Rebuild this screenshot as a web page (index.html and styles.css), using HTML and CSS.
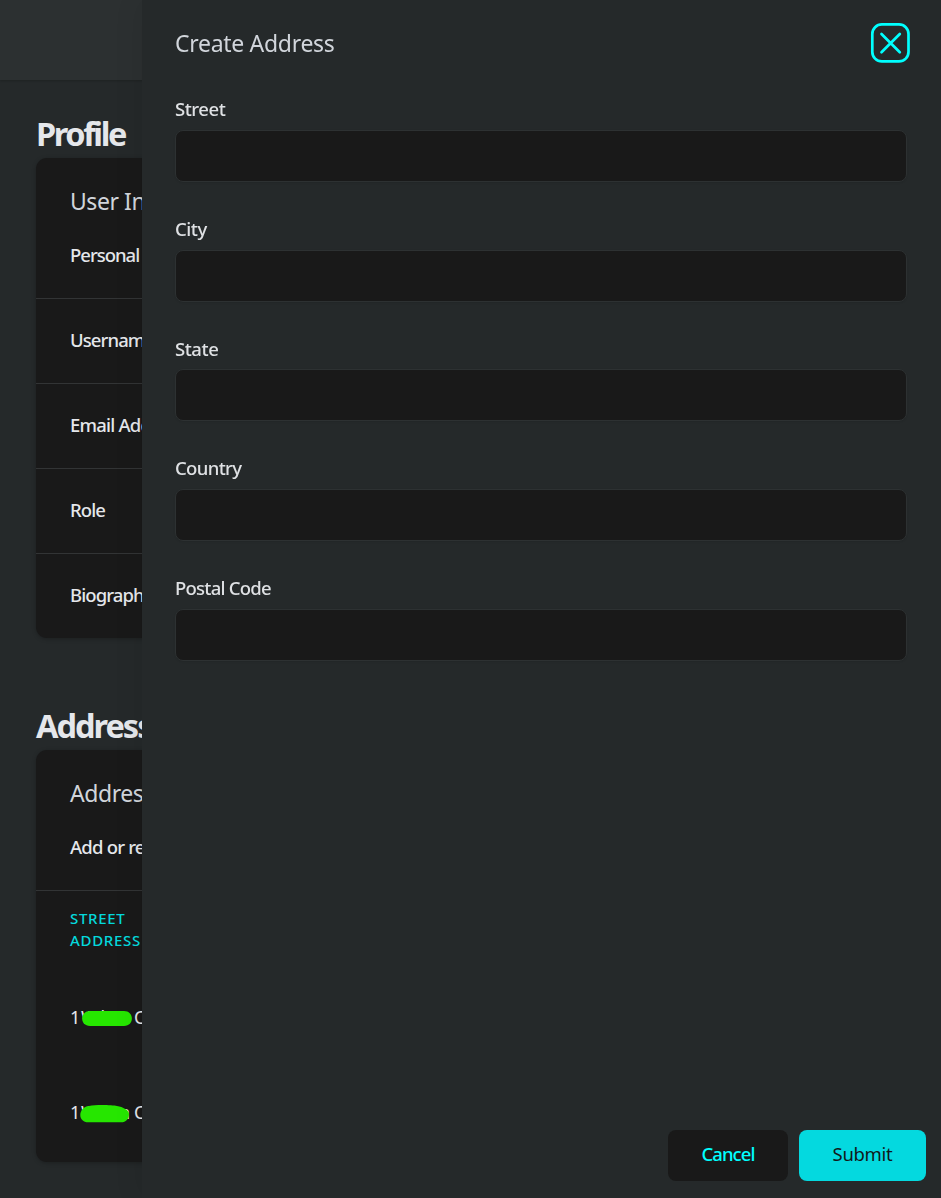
FILE: index.html
```html
<!DOCTYPE html>
<html lang="en">
<head>
<meta charset="utf-8">
<title>Profile</title>
<link rel="stylesheet" href="styles.css">
</head>
<body>
<div class="page">
  <header class="topbar"></header>
  <main class="content">
    <section class="section">
      <h1 class="heading heading-profile">Profile</h1>
      <div class="card">
        <div class="card-head">
          <h2 class="card-title user-title">User Info</h2>
          <p class="card-text personal">Personal</p>
        </div>
        <div class="row username">Username</div>
        <div class="row email">Email Address</div>
        <div class="row role">Role</div>
        <div class="row bio">Biography</div>
      </div>
    </section>
    <section class="section">
      <h1 class="heading heading-address">Addresses</h1>
      <div class="card card-addresses">
        <div class="card-head">
          <h2 class="card-title address-title">Addresses</h2>
          <p class="card-text add-text">Add or remove</p>
        </div>
        <div class="table-head"><span class="th-street">STREET</span><span class="th-address">ADDRESS</span></div>
        <div class="address"><span class="number">1</span><span class="name">W l</span><span class="end"></span><span>C</span>
          <svg class="marker" viewBox="0 0 54 20"><path d="M10 3H44C54.5 3 54.5 18 44 18H10C-.5 18-.5 3 10 3Z"/></svg>
        </div>
        <div class="address"><span class="number">1</span><span class="name">W l</span><span class="end">n</span><span>C</span>
          <svg class="marker" viewBox="0 0 54 20"><path d="M9 3C16 1.5 32 2 37 3C43 4 49 7 49 11C49 16 46 19.3 41 19.3H8.5C-3 19.3-2 4 9 3Z"/></svg>
        </div>
      </div>
    </section>
  </main>
</div>
<aside class="drawer">
  <header class="drawer-head">
    <h2 class="drawer-title">Create Address</h2>
    <button class="close" aria-label="Close"><svg viewBox="0 0 40 40"><rect x="2.3" y="1.4" width="36.2" height="37" rx="9.5"/><path d="M11.5 11L29.8 29.3M29.8 11L11.5 29.3"/></svg></button>
  </header>
  <form class="form">
    <label class="field"><span class="label l-street">Street</span><input class="input"></label>
    <label class="field"><span class="label l-city">City</span><input class="input"></label>
    <label class="field"><span class="label l-state">State</span><input class="input"></label>
    <label class="field"><span class="label l-country">Country</span><input class="input"></label>
    <label class="field"><span class="label l-postal">Postal Code</span><input class="input"></label>
  </form>
  <footer class="actions">
    <button class="button cancel">Cancel</button>
    <button class="button submit">Submit</button>
  </footer>
</aside>
</body>
</html>
```
FILE: styles.css
```css
* { box-sizing: border-box; }
body { margin: 0; height: 1198px; overflow: hidden; background: #25292a; color: #e5e7eb; font-family: "Noto Sans", sans-serif; }
h1, h2, p { margin: 0; }
.page { height: 1198px; overflow: hidden; white-space: nowrap; }
.topbar { height: 80px; background: #2c3031; box-shadow: 0 1px 2px rgba(0,0,0,.18); }
.content { padding: 31px 36px 0; }
.section { margin-bottom: 65px; }
.heading { height: 47px; font-size: 32.5px; line-height: 46px; font-weight: 700; letter-spacing: -2.4px; }
.heading-address { letter-spacing: -2px; }
.card { height: 480px; background: #191919; border-radius: 11px; box-shadow: 0 1px 4px rgba(0,0,0,.25); }
.card-addresses { height: 412px; }
.card-head { height: 140px; padding: 26px 34px 0; }
.card-title { font-size: 23px; font-weight: 400; line-height: 34px; letter-spacing: -.45px; color: #d1d5db; }
.card-text { margin-top: 23px; font-size: 18.5px; line-height: 27px; letter-spacing: -.8px; font-weight: 500; }
.row { height: 85px; padding: 27px 34px 0; border-top: 1px solid #323435; font-size: 18.5px; line-height: 27px; letter-spacing: -.9px; font-weight: 500; }
.personal { letter-spacing: -1px; }
.email { letter-spacing: -.8px; }
.table-head { display: flex; flex-direction: column; height: 82px; padding: 16px 34px 0; border-top: 1px solid #323435; color: #04d8dc; font-size: 15px; line-height: 22px; letter-spacing: .7px; font-weight: 500; }
.address { position: relative; display: flex; height: 95px; padding: 32px 34px 0; font-size: 18px; line-height: 27px; }
.number { width: 11px; }
.name { width: 37px; letter-spacing: -1px; }
.end { width: 16px; padding-left: 1px; }
.marker { position: absolute; left: 44px; top: 36px; width: 54px; height: 20px; fill: #26e600; }
.drawer { position: fixed; top: 0; right: 0; width: 799px; height: 1198px; display: flex; flex-direction: column; background: #25292a; box-shadow: 0 0 28px rgba(0,0,0,.09); }
.drawer-head { display: flex; justify-content: space-between; height: 95.2px; padding: 23px 31px 0 33px; }
.drawer-title { font-size: 23px; line-height: 40px; font-weight: 400; letter-spacing: -.3px; color: #d1d5db; }
.close { width: 40px; height: 40px; padding: 0; border: 0; background: none; }
.close svg { display: block; width: 40px; height: 40px; fill: none; stroke: #00ffff; stroke-width: 2.7; stroke-linecap: round; }
.form { display: flex; flex-direction: column; gap: 32.5px; padding: 0 34px 0 33px; }
.field { display: flex; flex-direction: column; gap: 7.8px; padding-top: .3px; }
.label { height: 27px; font-size: 18.5px; line-height: 28.8px; font-weight: 500; letter-spacing: -.45px; color: #dfe1e4; }
.l-country { letter-spacing: -.65px; }
.l-postal { letter-spacing: -.75px; }
.input { width: 100%; height: 52px; padding: 0 12px; border: 1px solid #2d3132; border-radius: 8px; background: #191919; color: #e5e7eb; box-shadow: 0 1px 2px rgba(0,0,0,.08); }
.actions { display: flex; justify-content: flex-end; gap: 11px; margin-top: auto; padding: 0 15px 17px; }
.button { height: 51px; padding: 0 0 4px; border: 0; border-radius: 8px; font-family: inherit; font-size: 18.5px; line-height: 27px; }
.cancel { width: 120px; background: #191919; color: #00ffff; font-weight: 500; letter-spacing: -.95px; }
.submit { width: 127px; background: #04d9df; color: #11191a; letter-spacing: -.3px; }
```
